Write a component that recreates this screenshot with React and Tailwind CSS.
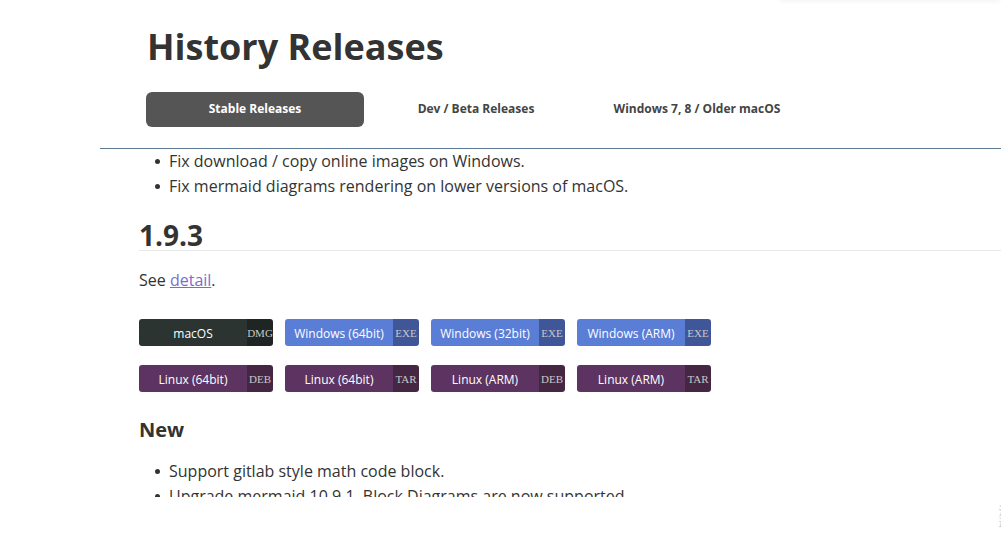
import React from 'react';

const downloads = [
  [
    { label: 'macOS', ext: 'DMG', kind: 'mac' },
    { label: 'Windows (64bit)', ext: 'EXE', kind: 'win' },
    { label: 'Windows (32bit)', ext: 'EXE', kind: 'win' },
    { label: 'Windows (ARM)', ext: 'EXE', kind: 'win' },
  ],
  [
    { label: 'Linux (64bit)', ext: 'DEB', kind: 'linux' },
    { label: 'Linux (64bit)', ext: 'TAR', kind: 'linux' },
    { label: 'Linux (ARM)', ext: 'DEB', kind: 'linux' },
    { label: 'Linux (ARM)', ext: 'TAR', kind: 'linux' },
  ],
];

const kindClasses = {
  mac: { main: 'bg-[#2c3432]', ext: 'bg-[#1f2523]' },
  win: { main: 'bg-[#5a7dd6]', ext: 'bg-[#3f5699]' },
  linux: { main: 'bg-[#5d3461]', ext: 'bg-[#452744]' },
};

const DownloadButton = ({ label, ext, kind }) => {
  const c = kindClasses[kind];
  return (
    <a className="flex h-[27px] w-[134px] overflow-hidden rounded-[3px] text-white">
      <span className={`flex flex-1 items-center justify-center pt-[2px] text-[12px] ${c.main}`}>{label}</span>
      <span className={`flex w-[26px] items-center justify-center pt-[1px] font-['Liberation_Serif',serif] text-[11px] text-[#c8c8c8] ${c.ext}`}>
        {ext}
      </span>
    </a>
  );
};

const Bullet = ({ children }) => (
  <li className="flex items-center leading-[25px]">
    <span className="ml-[16px] mr-[9px] h-[5px] w-[5px] rounded-full bg-[#333]" />
    <span>{children}</span>
  </li>
);

export default function App() {
  return (
    <div className="relative h-[553px] w-[1001px] overflow-hidden bg-white font-['Open_Sans',sans-serif] text-[#333]">
      {/* faint shadow of a bar sitting above the viewport */}
      <div className="absolute left-[780px] right-0 top-[-30px] h-[30px] bg-white shadow-[0_0_6px_rgba(0,0,0,0.08)]" />

      <header className="ml-[100px] border-b border-[#5d7892]">
        <h1 className="pl-[47px] pt-[25px] text-[36px] font-bold leading-[44px] text-[#333]">History Releases</h1>
        <nav className="mt-[23px] flex gap-[3px] pb-[21px] pl-[46px] text-[12px] font-bold">
          <span className="flex h-[35px] w-[218px] items-center justify-center rounded-[6px] bg-[#555] pb-[1px] text-white">
            Stable Releases
          </span>
          <span className="flex h-[35px] w-[218px] items-center justify-center pb-[1px] text-[#444]">Dev / Beta Releases</span>
          <span className="flex h-[35px] w-[218px] items-center justify-center pb-[1px] text-[#444]">Windows 7, 8 / Older macOS</span>
        </nav>
      </header>

      {/* scrolled release notes */}
      <main className="h-[348px] overflow-hidden pl-[139px] text-[16px]">
        <ul>
          <Bullet>Fix download / copy online images on Windows.</Bullet>
          <Bullet>Fix mermaid diagrams rendering on lower versions of macOS.</Bullet>
        </ul>

        <h2 className="mt-[21px] border-b border-[#eaeaea] text-[28px] font-bold leading-[30px]">1.9.3</h2>

        <p className="mt-[17px] leading-[25px]">
          See <a className="text-[#7a6dcf] underline">detail</a>.
        </p>

        <div className="mt-[26px] flex flex-col gap-[19px]">
          {downloads.map((row, i) => (
            <div key={i} className="flex gap-[12px]">
              {row.map((d, j) => (
                <DownloadButton key={j} {...d} />
              ))}
            </div>
          ))}
        </div>

        <h3 className="mt-[26px] text-[20px] font-bold leading-[24px]">New</h3>

        <ul className="mt-[17px]">
          <Bullet>Support gitlab style math code block.</Bullet>
          <Bullet>Upgrade mermaid 10.9.1, Block Diagrams are now supported.</Bullet>
        </ul>
      </main>

      {/* clipped side widget text at the right edge */}
      <div className="absolute left-[995px] top-[505px] font-['Noto_Sans_CJK_SC',sans-serif] text-[12px] leading-[18px] text-[#ccc] [writing-mode:vertical-rl]">
        滚动
      </div>
    </div>
  );
}
